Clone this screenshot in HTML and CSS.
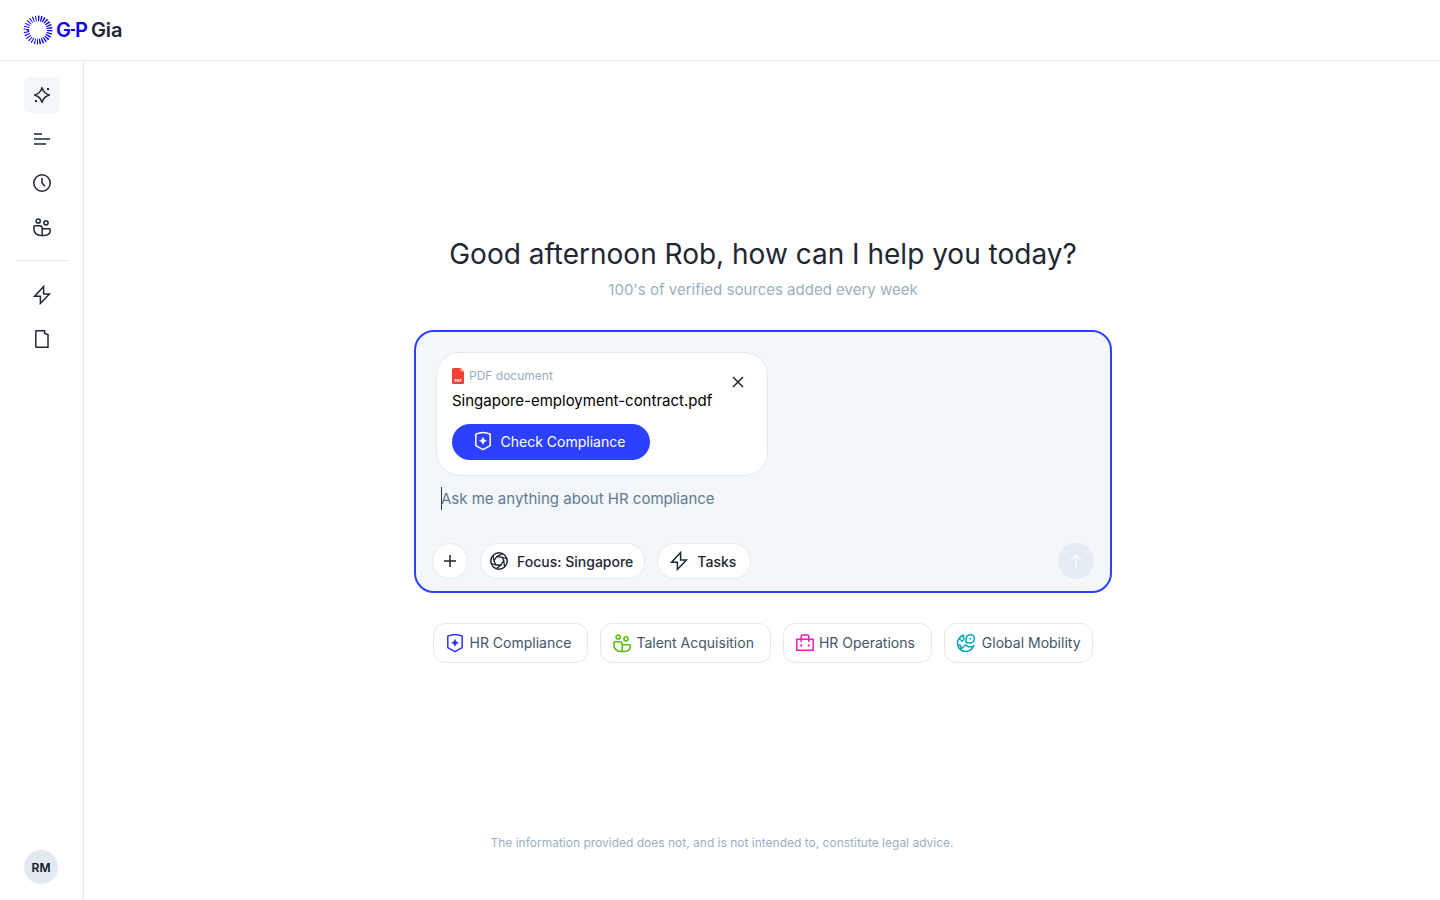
FILE: index.html
```html
<!DOCTYPE html>
<html lang="en">
<head>
<meta charset="utf-8">
<meta name="viewport" content="width=device-width, initial-scale=1">
<title>G-P Gia</title>
<link rel="stylesheet" href="styles.css">
</head>
<body>
<svg class="sprite" aria-hidden="true">
  <symbol id="i-shield" viewBox="0 0 20 20"><path stroke-linejoin="round" d="M2.8 3.2Q6.5 1.4 10 1.4T17.2 3.2V14.6L10 18.6 2.8 14.6Z"/><path class="fill" d="M10 5.4Q10.8 9 14.2 9.7Q10.8 10.4 10 14Q9.2 10.4 5.8 9.7Q9.2 9 10 5.4Z"/></symbol>
  <symbol id="i-people" viewBox="0 0 20 20"><circle cx="6.2" cy="4" r="2.1"/><circle cx="14" cy="5.8" r="2.1"/><path d="M10.2 18.4H9C4.6 18.4 1.9 15.8 1.9 12V9.9Q1.9 8.8 3 8.8H7.5Q10.2 8.8 10.2 11.5ZM10.2 18.4H12C15.8 18.4 18.2 16.4 18.2 13.2V12.6Q18.2 11.8 17.3 11.8H10.2"/></symbol>
  <symbol id="i-bolt" viewBox="0 0 20 20"><path stroke-linejoin="miter" d="M11.6 1.6 2.6 11.2H8.4V18.4L17.4 9H11.6Z"/></symbol>
</svg>
<header class="topbar">
  <a class="brand" href="#" aria-label="G-P Gia home">
    <svg class="brand-mark" viewBox="0 0 30 30" aria-hidden="true"><path pathLength="14" stroke-dasharray=".52 .48" d="M15 3.4A11.6 11.6 0 0 1 15 26.6"/><path pathLength="14" stroke-dasharray=".38 .62" d="M15 26.6A11.6 11.6 0 0 1 15 3.4"/></svg>
    <span class="brand-gp">G<span class="brand-dash"></span>P</span>
    <span class="brand-gia">Gia</span>
  </a>
</header>
<div class="shell">
  <aside class="sidebar">
    <nav class="nav" aria-label="Main">
      <button class="nav-item active" aria-label="New chat"><svg class="icon" viewBox="0 0 20 20"><path stroke-linejoin="round" d="M10 2.6Q11.6 8.4 17.4 10Q11.6 11.6 10 17.4Q8.4 11.6 2.6 10Q8.4 8.4 10 2.6Z"/><path class="fill" d="M15 3h2v2h-2zM3 15h2v2H3z"/></svg></button>
      <button class="nav-item" aria-label="Menu"><svg class="icon" viewBox="0 0 20 20"><path d="M2 5H10M2 10H18M2 15H14"/></svg></button>
      <button class="nav-item" aria-label="History"><svg class="icon" viewBox="0 0 20 20"><circle cx="10" cy="10" r="8.2"/><path d="M10 5V10L13 13.2"/></svg></button>
      <button class="nav-item" aria-label="People"><svg class="icon"><use href="#i-people"/></svg></button>
      <hr class="nav-divider">
      <button class="nav-item" aria-label="Tasks"><svg class="icon"><use href="#i-bolt"/></svg></button>
      <button class="nav-item" aria-label="Documents"><svg class="icon" viewBox="0 0 20 20"><path d="M4.4 1.8H12.6V4.2L16 5.8V18.2H4.4Q3.8 18.2 3.8 17.6V2.4Q3.8 1.8 4.4 1.8Z"/></svg></button>
    </nav>
    <button class="avatar">RM</button>
  </aside>
  <main class="main">
    <h1 class="title">Good afternoon Rob, how can I help you today?</h1>
    <p class="subtitle">100's of verified sources added every week</p>
    <form class="composer">
      <section class="attachment">
        <div class="file">
          <div class="file-type"><svg class="pdf-icon" viewBox="0 0 12 16" aria-hidden="true"><path fill="#f24135" d="M1.5 0H8.5L12 3.5V14.5Q12 16 10.5 16H1.5Q0 16 0 14.5V1.5Q0 0 1.5 0Z"/><path fill="#ff9d91" d="M8.5 0 12 3.5H9.5Q8.5 3.5 8.5 2.5Z"/><path fill="none" stroke="#fff" stroke-width=".8" d="M3 13.8V11.5H4.3V12.8H3M5.4 11.5V13.6H6.7V11.5ZM8 13.8V11.5H9.5M8 12.7H9.3"/></svg>PDF document</div>
          <div class="file-name">Singapore-employment-contract.pdf</div>
          <button class="check" type="button"><svg class="icon"><use href="#i-shield"/></svg>Check Compliance</button>
        </div>
        <button class="close" type="button" aria-label="Remove file"><svg class="icon" viewBox="0 0 20 20"><path d="M5 5 15 15M15 5 5 15"/></svg></button>
      </section>
      <div class="prompt">
        <input class="prompt-input" type="text" aria-label="Ask a question" placeholder="Ask me anything about HR compliance">
        <span class="caret"></span>
      </div>
      <div class="toolbar">
        <button class="pill round" type="button" aria-label="Add"><svg class="icon" viewBox="0 0 20 20"><path d="M10 4V16M4 10H16"/></svg></button>
        <button class="pill focus" type="button"><svg class="icon" viewBox="0 0 20 20"><circle cx="10" cy="10" r="8.2"/><path stroke-width="1.3" d="M14.7 9.2 12.2 13.9 6.9 14 4.9 9.8 7.6 5.6 12.8 6ZM7.6 5.6 13.6 2.6M12.8 6 18 8M14.7 9.2 15.6 15.6M12.2 13.9 7.4 17.6M6.9 14 1.9 12.4M4.9 9.8 4 4.5"/></svg>Focus: Singapore</button>
        <button class="pill tasks" type="button"><svg class="icon"><use href="#i-bolt"/></svg>Tasks</button>
        <button class="send" type="submit" aria-label="Send" disabled><svg class="icon" viewBox="0 0 20 20"><path stroke-width="1.9" d="M10 16.5V4M4.5 9.4 10 3.9 15.5 9.4"/></svg></button>
      </div>
    </form>
    <div class="topics">
      <button class="topic"><svg class="icon blue"><use href="#i-shield"/></svg>HR Compliance</button>
      <button class="topic"><svg class="icon green"><use href="#i-people"/></svg>Talent Acquisition</button>
      <button class="topic"><svg class="icon pink" viewBox="0 0 20 20"><path d="M1.8 6.2H18.2V17.2H1.8ZM6.2 9V3.2Q6.2 2 7.4 2H12.6Q13.8 2 13.8 3.2V9"/><path class="fill" d="M5.2 11.6h2v2h-2zM12.8 11.6h2v2h-2z"/></svg>HR Operations</button>
      <button class="topic wide"><svg class="icon teal" viewBox="0 0 20 20"><path d="M8.4 2A8.3 8.3 0 1 0 17.9 12M3.4 5.8 6.2 8.2Q9.4 5.4 6.6 2.8M2.2 12.2Q5.4 11.4 5 16M5 16 9.6 12 12.2 13.8 17 13.4"/><path d="M10 9.6Q9.8 7.4 10.2 5.8A4.1 4.1 0 1 1 14.3 9.9Q12 10 10 9.6Z"/><circle class="fill" cx="14.3" cy="5.8" r="1"/></svg>Global Mobility</button>
    </div>
    <p class="disclaimer">The information provided does not, and is not intended to, constitute legal advice.</p>
  </main>
</div>
</body>
</html>
```

FILE: styles.css
```css
* { box-sizing: border-box; }

body {
  margin: 0;
  min-height: 100vh;
  display: flex;
  flex-direction: column;
  font-family: Inter, "Liberation Sans", sans-serif;
  color: #1f2733;
  background: #fff;
}

button {
  font: inherit;
  color: inherit;
  background: none;
  border: 0;
  padding: 0;
  cursor: pointer;
}

.sprite { position: absolute; width: 0; height: 0; }

.icon {
  width: 20px;
  height: 20px;
  flex: none;
  fill: none;
  stroke: currentColor;
  stroke-width: 1.5;
}

.fill { fill: currentColor; stroke: none; }

.topbar {
  display: flex;
  align-items: center;
  height: 61px;
  padding: 0 23px;
  border-bottom: 1px solid #e4ebf3;
}

.brand {
  display: flex;
  align-items: center;
  text-decoration: none;
  font-size: 20px;
  line-height: 24px;
}

.brand-mark {
  width: 30px;
  height: 30px;
  margin-right: 3px;
  fill: none;
  stroke: #0a00ff;
  stroke-width: 5.6;
}

.brand-gp {
  display: flex;
  align-items: center;
  color: #0a00ff;
  font-weight: 600;
}

.brand-dash { width: 4px; height: 2px; background: #0a00ff; }
.brand-gia { margin-left: 3px; color: #23233b; font-weight: 600; }

.shell { flex: 1; display: flex; }

.sidebar {
  display: flex;
  flex-direction: column;
  justify-content: space-between;
  width: 84px;
  padding: 16px 15px 16px 16px;
  border-right: 1px solid #e4e8f1;
}

.nav { display: flex; flex-direction: column; gap: 8px; }

.nav-item {
  display: grid;
  place-items: center;
  width: 36px;
  height: 36px;
  margin-left: 8px;
  border-radius: 6px;
}

.nav-item.active { background: #f3f7fa; }

.nav-divider {
  width: 100%;
  margin: 7px 0 8px;
  border: 0;
  border-top: 1px solid #e4e8f5;
}

.avatar {
  width: 34px;
  height: 34px;
  margin-left: 8px;
  border-radius: 50%;
  background: #e2e9f1;
  color: #10151c;
  font-size: 12px;
  font-weight: 600;
}

.main {
  flex: 1;
  display: flex;
  flex-direction: column;
  align-items: center;
  padding: 173px 24px 48px 26px;
}

.title {
  margin: 0;
  font-size: 28px;
  line-height: 40px;
  font-weight: 400;
}

.subtitle {
  margin: 4px 0 0;
  font-size: 15px;
  line-height: 24px;
  color: #9aafc3;
}

.composer {
  width: 100%;
  max-width: 698px;
  margin-top: 28px;
  padding: 20px 16px 12px;
  border: 2px solid #2d40ff;
  border-radius: 20px;
  background: #f3f7fa;
}

.attachment {
  display: flex;
  justify-content: space-between;
  align-items: flex-start;
  width: 332px;
  max-width: 100%;
  margin-left: 4px;
  padding: 15px;
  border: 1px solid #e2eaf1;
  border-radius: 24px;
  background: #fff;
}

.file-type {
  display: flex;
  align-items: center;
  gap: 5px;
  font-size: 12px;
  line-height: 16px;
  color: #9aafc3;
}

.pdf-icon { width: 12px; height: 16px; }

.file-name {
  margin: 5px 0 11px;
  font-size: 15px;
  line-height: 24px;
  color: #000;
}

.check {
  display: flex;
  align-items: center;
  justify-content: center;
  gap: 8px;
  width: 198px;
  height: 36px;
  padding: 0 4px 2px 0;
  border-radius: 18px;
  background: #2d40ff;
  color: #fff;
  font-size: 14px;
}

.close { display: flex; margin: 4px 4px 0 0; }

.prompt { position: relative; margin: 8px 9px 30px; }

.prompt-input {
  display: block;
  width: 100%;
  height: 29px;
  padding: 0;
  border: 0;
  outline: 0;
  background: none;
  color: #1f2733;
  font: inherit;
  font-size: 15px;
}

.prompt-input::placeholder { color: #5f7a92; opacity: 1; }

.caret {
  position: absolute;
  left: 0;
  top: 3px;
  width: 1px;
  height: 23px;
  background: #2b3d50;
}

.toolbar { display: flex; gap: 12px; }

.pill {
  display: flex;
  align-items: center;
  gap: 8px;
  height: 36px;
  padding: 0 11px 0 8px;
  border: 1px solid #e2eaf1;
  border-radius: 18px;
  background: #fff;
  font-size: 14px;
  font-weight: 500;
}

.pill.round { width: 36px; padding: 0; justify-content: center; }
.pill.tasks { padding: 0 14px 0 11px; }

.send {
  display: grid;
  place-items: center;
  width: 36px;
  height: 36px;
  margin-left: auto;
  border-radius: 50%;
  background: #e4ebf3;
  color: #f3f7fa;
}

.topics {
  display: flex;
  flex-wrap: wrap;
  gap: 12px;
  margin-top: 30px;
}

.topic {
  display: flex;
  align-items: center;
  gap: 4px;
  height: 40px;
  padding: 0 16px 1px 11px;
  border: 1px solid #e2eaf3;
  border-radius: 12px;
  color: #43566a;
  font-size: 14px;
}

.topic.wide { gap: 6px; padding-right: 11px; }

.blue { color: #2d32ff; }
.green { color: #4fc00a; }
.pink { color: #f21cb1; }
.teal { color: #00a5bf; }

.disclaimer {
  margin: auto 82px 0 0;
  font-size: 12px;
  line-height: 18px;
  color: #9aafc3;
}
```
